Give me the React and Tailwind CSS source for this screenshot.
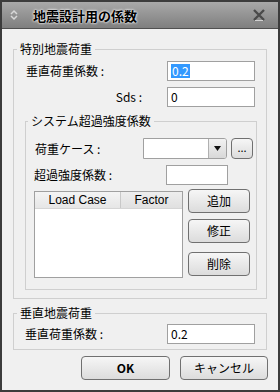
import React from "react";

const font = { fontFamily: '"Noto Sans CJK JP", "Liberation Sans", sans-serif' };

const Input = ({ value, selected, w = "w-[88px]" }) => (
  <div className={`${w} h-[20px] bg-white border border-[#a0a0a0] flex items-center pl-[3px] text-[12px] leading-none`}>
    {selected ? (
      <span className="bg-[#3399ff] text-white px-[1px] leading-[14px]">{value}</span>
    ) : (
      <span className="leading-[14px]">{value}</span>
    )}
  </div>
);

const Button = ({ children, w = "w-[62px]", h = "h-[24px]", bold }) => (
  <button
    className={`${w} ${h} rounded-[4px] border border-[#707070] bg-gradient-to-b from-[#f6f6f6] to-[#dcdcdc] text-[12px] text-black flex items-center justify-center ${bold ? "font-bold" : ""}`}
  >
    {children}
  </button>
);

const GroupLabel = ({ children, ml = "ml-[3px]" }) => (
  <div className={`-mt-[9px] ${ml} w-fit px-[3px] bg-[#f0f0f0] text-[12px] leading-[16px] h-[16px]`}>
    {children}
  </div>
);

export default function App() {
  return (
    <div className="w-[280px] h-[392px] border-2 border-[#3c3c3c] bg-[#f0f0f0] flex flex-col text-black" style={font}>
      {/* title bar */}
      <div className="h-[27px] border-b border-[#505050] bg-gradient-to-b from-[#a9a9a9] to-[#7f7f7f] flex items-center pl-[8px] pr-[8px]">
        <svg width="8" height="12" viewBox="0 0 8 12" className="mr-[15px]">
          <path d="M1 5 L4 2 L7 5" fill="none" stroke="#d8d8d8" strokeWidth="1.5" />
          <path d="M1 7 L4 10 L7 7" fill="none" stroke="#d8d8d8" strokeWidth="1.5" />
        </svg>
        <span className="text-[13px] font-bold leading-none [text-shadow:0_0_2px_#ffffff,0_0_3px_#ffffff]">
          地震設計用の係数
        </span>
        <div className="flex-1" />
        <svg width="14" height="12" viewBox="0 0 14 12" className="mr-[4px]">
          <path d="M2 1 L12 11 M12 1 L2 11" stroke="#4a4a4a" strokeWidth="2.4" />
          <path d="M3 11.5 L11 11.5" stroke="#d0d0d0" strokeWidth="1" />
        </svg>
      </div>

      {/* group 1 */}
      <div className="mt-[20px] ml-[11px] w-[254px] h-[250px] border border-[#cfcfcf] flex flex-col">
        <GroupLabel>特別地震荷重</GroupLabel>
        <div className="mt-[4px] pl-[12px] flex items-center text-[12px]">
          <span className="w-[141px]">垂直荷重係数 :</span>
          <Input value="0.2" selected />
        </div>
        <div className="mt-[6px] pl-[12px] flex items-center text-[12px]">
          <span className="w-[141px] text-right pr-[25px]">Sds :</span>
          <Input value="0" />
        </div>

        {/* subgroup */}
        <div className="mt-[14px] ml-[11px] w-[232px] h-[169px] border border-[#cfcfcf] flex flex-col">
          <GroupLabel ml="ml-[2px]">システム超過強度係数</GroupLabel>
          <div className="mt-[9px] pl-[9px] flex items-center text-[12px]">
            <span className="w-[108px]">荷重ケース :</span>
            <div className="w-[84px] h-[21px] flex border border-[#a0a0a0] rounded-r-[3px] bg-white">
              <div className="flex-1" />
              <div className="w-[18px] border-l border-[#b0b0b0] bg-gradient-to-b from-[#f2f2f2] to-[#d8d8d8] flex items-center justify-center rounded-r-[2px]">
                <svg width="7" height="5" viewBox="0 0 7 5">
                  <path d="M0 0 L7 0 L3.5 5 Z" fill="#111" />
                </svg>
              </div>
            </div>
            <button className="ml-[4px] w-[22px] h-[21px] rounded-[4px] border border-[#707070] bg-gradient-to-b from-[#f6f6f6] to-[#dcdcdc] text-[11px] leading-none flex items-end justify-center pb-[5px]">
              ...
            </button>
          </div>
          <div className="mt-[6px] pl-[8px] flex items-center text-[12px]">
            <span className="w-[132px]">超過強度係数 :</span>
            <Input value="" w="w-[62px]" />
          </div>
          <div className="mt-[6px] pl-[8px] flex">
            <div className="w-[149px] h-[87px] border border-[#a0a0a0] bg-white flex flex-col">
              <div className="h-[17px] flex text-[12px] leading-none border-b border-[#d5d5d5]" style={{ fontFamily: '"Liberation Sans", sans-serif' }}>
                <div className="w-[86px] bg-gradient-to-b from-[#f4f4f4] to-[#e6e6e6] border-r border-[#c8c8c8] flex items-center justify-center">
                  Load Case
                </div>
                <div className="flex-1 bg-gradient-to-b from-[#eeeeee] to-[#e0e0e0] flex items-center justify-center">
                  Factor
                </div>
              </div>
            </div>
            <div className="ml-[5px] -mt-[2px] flex flex-col">
              <Button>追加</Button>
              <div className="mt-[6px]">
                <Button>修正</Button>
              </div>
              <div className="mt-[9px]">
                <Button>削除</Button>
              </div>
            </div>
          </div>
        </div>
      </div>

      {/* group 2 */}
      <div className="mt-[14px] ml-[11px] w-[254px] h-[37px] border border-[#cfcfcf] flex flex-col">
        <GroupLabel>垂直地震荷重</GroupLabel>
        <div className="mt-[3px] pl-[11px] flex items-center text-[12px]">
          <span className="w-[142px]">垂直荷重係数 :</span>
          <Input value="0.2" />
        </div>
      </div>

      {/* footer buttons */}
      <div className="mt-[6px] pr-[10px] flex justify-end gap-[10px]">
        <Button w="w-[89px]" bold>OK</Button>
        <Button w="w-[88px]">キャンセル</Button>
      </div>
    </div>
  );
}
